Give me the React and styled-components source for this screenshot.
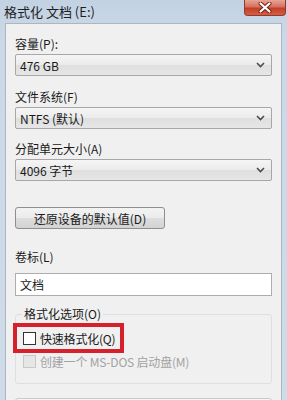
import styled, { createGlobalStyle } from "styled-components";

const GlobalStyle = createGlobalStyle`
  html, body {
    margin: 0;
    padding: 0;
    background: #cbd8e7;
  }
  body {
    font-family: "Noto Sans CJK SC", "Liberation Sans", sans-serif;
  }
`;

const Frame = styled.div`
  width: 287px;
  height: 400px;
  overflow: hidden;
  background: linear-gradient(to bottom, #c3d2e3 0px, #cbd8e7 40px, #cfdbe9 100%);
  display: flex;
  flex-direction: column;
`;

const TitleBar = styled.div`
  height: 23px;
  flex-shrink: 0;
  display: flex;
  justify-content: space-between;
  align-items: flex-start;
`;

const Title = styled.div`
  font-size: 13px;
  line-height: 13px;
  color: #1e1e1e;
  padding: 5px 0 0 4px;
  white-space: nowrap;
`;

const CloseButton = styled.div`
  width: 42px;
  height: 16px;
  margin-right: 1px;
  box-sizing: border-box;
  border: 1px solid #8e3a2c;
  border-top: none;
  border-radius: 0 0 4px 4px;
  background: linear-gradient(to bottom, #e6a596 0%, #d8705c 45%, #c23f28 55%, #d65d44 100%);
  display: flex;
  align-items: center;
  justify-content: center;

  svg {
    display: block;
  }
`;

const Content = styled.div`
  flex: 1;
  margin: 0 5px;
  background: #f0f0f0;
  border: 1px solid #a9b6c4;
  border-bottom: none;
  padding: 12px 9px 0 9px;
  display: flex;
  flex-direction: column;
`;

const Label = styled.div`
  font-size: 12px;
  line-height: 16px;
  color: #1a1a1a;
  white-space: nowrap;
  margin-top: ${(p) => p.$top || 0}px;
  margin-bottom: ${(p) => p.$bottom || 2}px;
`;

const Select = styled.div`
  height: 22px;
  box-sizing: border-box;
  border: 1px solid #a7a7a7;
  border-radius: 2px;
  background: linear-gradient(to bottom, #f5f5f5 0%, #ebebeb 50%, #dfdfdf 51%, #e6e6e6 100%);
  display: flex;
  align-items: center;
  justify-content: space-between;
  padding: 0 6px 0 4px;
  font-size: 12px;
  color: #1a1a1a;
`;

const Chevron = () => (
  <svg width="9" height="6" viewBox="0 0 9 6">
    <path d="M1 1 L4.5 4.5 L8 1" fill="none" stroke="#4c4c4c" strokeWidth="1.6" />
  </svg>
);

const Button = styled.div`
  width: 150px;
  height: 22px;
  box-sizing: border-box;
  margin-top: 26px;
  border: 1px solid #8f8f8f;
  border-radius: 3px;
  background: linear-gradient(to bottom, #f3f3f3 0%, #ebebeb 50%, #dddddd 51%, #d3d3d3 100%);
  font-size: 12px;
  color: #1a1a1a;
  display: flex;
  align-items: center;
  justify-content: center;
`;

const TextInput = styled.div`
  height: 23px;
  box-sizing: border-box;
  border: 1px solid #abadb3;
  background: #ffffff;
  display: flex;
  align-items: center;
  padding: 0 4px;
  font-size: 12px;
  color: #1a1a1a;
`;

const Group = styled.div`
  position: relative;
  margin-top: 18px;
  height: 62px;
  border: 1px solid #dcdfe3;
  border-radius: 3px;
  padding: 6px 7px 0 7px;
  display: flex;
  flex-direction: column;
`;

const GroupTitle = styled.div`
  position: absolute;
  top: -9px;
  left: 6px;
  padding: 0 2px;
  background: #f0f0f0;
  font-size: 12px;
  line-height: 16px;
  color: #1a1a1a;
`;

const Highlight = styled.div`
  align-self: flex-start;
  margin: 2px 0 0 -10px;
  padding: 4px 5px 4px 6px;
  border: 4px solid #d4212b;
`;

const CheckRow = styled.div`
  display: flex;
  align-items: center;
  gap: 4px;
  height: 14px;
  font-size: 12px;
  letter-spacing: -0.2px;
  color: ${(p) => (p.$disabled ? "#a2a2a2" : "#1a1a1a")};
  margin-top: ${(p) => p.$top || 0}px;
`;

const Box = styled.span`
  width: 13px;
  height: 13px;
  box-sizing: border-box;
  border: 1px solid ${(p) => (p.$disabled ? "#c8c8c8" : "#333333")};
  background: ${(p) => (p.$disabled ? "#e6e6e6" : "#ffffff")};
  flex-shrink: 0;
`;

const BottomButton = styled.div`
  margin-top: 14px;
  height: 22px;
  border: 1px solid #c9c9c9;
  border-radius: 3px;
  background: linear-gradient(to bottom, #f6f6f6, #ececec);
`;

export default function App() {
  return (
    <>
      <GlobalStyle />
      <Frame>
        <TitleBar>
          <Title>格式化 文档 (E:)</Title>
          <CloseButton>
            <svg width="14" height="11" viewBox="0 0 14 11">
              <path d="M2.5 1.5 L11.5 9.5 M11.5 1.5 L2.5 9.5" stroke="#6b1f14" strokeWidth="4" strokeLinecap="round" />
              <path d="M2.5 1.5 L11.5 9.5 M11.5 1.5 L2.5 9.5" stroke="#ffffff" strokeWidth="2.2" strokeLinecap="round" />
            </svg>
          </CloseButton>
        </TitleBar>
        <Content>
          <Label>容量(P):</Label>
          <Select>
            476 GB
            <Chevron />
          </Select>
          <Label $top={13}>文件系统(F)</Label>
          <Select>
            NTFS (默认)
            <Chevron />
          </Select>
          <Label $top={12}>分配单元大小(A)</Label>
          <Select>
            4096 字节
            <Chevron />
          </Select>
          <Button>还原设备的默认值(D)</Button>
          <Label $top={20} $bottom={8}>卷标(L)</Label>
          <TextInput>文档</TextInput>
          <Group>
            <GroupTitle>格式化选项(O)</GroupTitle>
            <Highlight>
              <CheckRow>
                <Box />
                快速格式化(Q)
              </CheckRow>
            </Highlight>
            <CheckRow $disabled $top={1}>
              <Box $disabled />
              创建一个 MS-DOS 启动盘(M)
            </CheckRow>
          </Group>
          <BottomButton />
        </Content>
      </Frame>
    </>
  );
}
